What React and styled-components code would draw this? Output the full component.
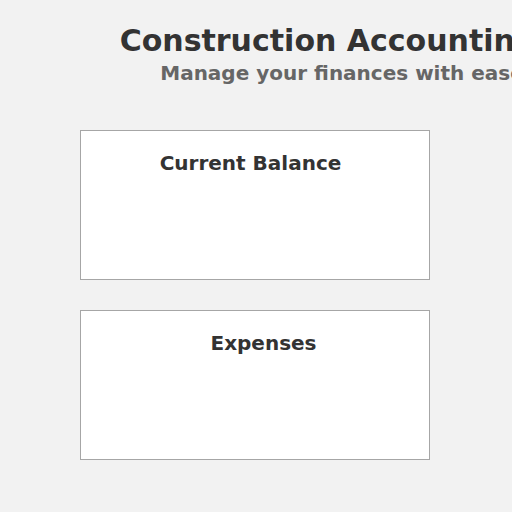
import styled, { createGlobalStyle } from "styled-components"

const GlobalStyle = createGlobalStyle`
  html, body {
    margin: 0;
    padding: 0;
    background: #f2f2f2;
    font-family: "DejaVu Sans", sans-serif;
    overflow: hidden;
  }
`

const Page = styled.div`
  width: 512px;
  height: 512px;
  overflow: hidden;
`

const Header = styled.header`
  width: 684px;
  padding-top: 23px;
  text-align: center;
  white-space: nowrap;
`

const Title = styled.h1`
  margin: 0;
  padding-right: 28px;
  font-size: 30px;
  font-weight: bold;
  color: #333333;
`

const Subtitle = styled.p`
  margin: 3px 0 0;
  font-size: 20px;
  font-weight: bold;
  color: #666666;
`

const CardList = styled.main`
  display: flex;
  flex-direction: column;
  gap: 30px;
  margin: 45px 0 0 80px;
  width: 350px;
`

const Card = styled.section`
  box-sizing: border-box;
  height: 150px;
  background: #ffffff;
  border: 1px solid #a6a6a6;
  padding: 20px ${(p) => p.$right || 0}px 0 ${(p) => p.$left || 0}px;
`

const CardTitle = styled.h3`
  margin: 0;
  font-size: 20px;
  font-weight: bold;
  color: #333333;
  text-align: center;
`

export default function App() {
  return (
    <Page>
      <GlobalStyle />
      <Header>
        <Title>Construction Accounting</Title>
        <Subtitle>Manage your finances with ease</Subtitle>
      </Header>
      <CardList>
        <Card $right={9}>
          <CardTitle>Current Balance</CardTitle>
        </Card>
        <Card $left={17}>
          <CardTitle>Expenses</CardTitle>
        </Card>
      </CardList>
    </Page>
  )
}
